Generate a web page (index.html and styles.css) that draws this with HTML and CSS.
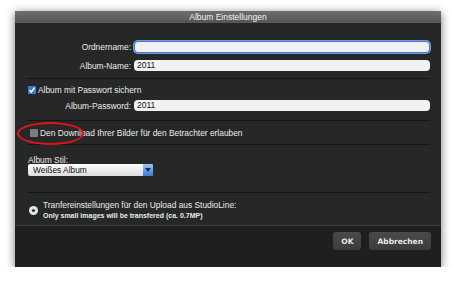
FILE: index.html
```html
<!DOCTYPE html>
<html lang="de">
<head>
  <meta charset="UTF-8">
  <title>Album Einstellungen</title>
  <link rel="stylesheet" href="styles.css">
</head>
<body>
  <div class="dialog">
    <div class="titlebar">Album Einstellungen</div>

    <!-- Name -->
    <div class="section sec-name">
      <div class="row">
        <label class="lbl">Ordnername:</label>
        <div class="input focus"></div>
      </div>
      <div class="row">
        <label class="lbl">Album-Name:</label>
        <div class="input">2011</div>
      </div>
    </div>

    <!-- Passwort -->
    <div class="section sec-pass">
      <div class="check-row">
        <span class="check on">
          <svg width="8" height="8" viewBox="0 0 8 8"><path d="M1.5 4.2 L3.3 6 L6.6 1.6" fill="none" stroke="#fff" stroke-width="1.5"/></svg>
        </span>
        Album mit Passwort sichern
      </div>
      <div class="row">
        <label class="lbl">Album-Password:</label>
        <div class="input">2011</div>
      </div>
    </div>

    <!-- Download -->
    <div class="section sec-dl">
      <div class="check-row">
        <span class="check"></span>
        Den Download Ihrer Bilder für den Betrachter erlauben
      </div>
      <span class="mark"></span>
    </div>

    <!-- Stil -->
    <div class="section sec-style">
      <div class="style-lbl">Album Stil:</div>
      <div class="select">
        <span class="sel-text">Weißes Album</span>
        <span class="sel-btn">
          <svg width="6" height="4" viewBox="0 0 6 4"><path d="M0 0 H6 L3 4 Z" fill="#1a2a55"/></svg>
        </span>
      </div>
    </div>

    <!-- Transfer -->
    <div class="section sec-transfer">
      <svg class="disc" width="9" height="9" viewBox="0 0 9 9"><circle cx="4.5" cy="4.5" r="4.5" fill="#e6e6e6"/><circle cx="4.5" cy="4.5" r="1.6" fill="#333"/></svg>
      <div class="transfer-text">
        <div class="t1">Tranfereinstellungen für den Upload aus StudioLine:</div>
        <div class="t2">Only small images will be transfered (ca. 0.7MP)</div>
      </div>
    </div>

    <div class="footer">
      <button class="btn">OK</button>
      <button class="btn">Abbrechen</button>
    </div>
  </div>
</body>
</html>
```

FILE: styles.css
```css
body {
  margin: 0;
  background: #fff;
  font-family: "Liberation Sans", Arial, sans-serif;
  font-size: 8.4px;
  color: #ececec;
}

/* dialog window */
.dialog {
  width: 426px;
  margin: 11px 0 0 15px;
  background: #262727;
  box-shadow: 0 2px 9px rgba(0,0,0,0.55);
  display: flex;
  flex-direction: column;
}

.titlebar {
  height: 12px;
  line-height: 12px;
  text-align: center;
  color: #f2f2f2;
  background: linear-gradient(#6e6e6e, #555);
  font-size: 8.5px;
}

/* sections with dark separators */
.section {
  margin: 0 11px 0 12px;
  border-bottom: 1px solid #151515;
  display: flex;
  flex-direction: column;
}

.row {
  display: flex;
  align-items: center;
}
.lbl {
  width: 104px;
  text-align: right;
  padding-right: 3px;
}
.input {
  flex: 1;
  height: 11px;
  line-height: 11px;
  background: #f1f1f1;
  border-radius: 4px;
  color: #111;
  padding-left: 3px;
  font-size: 8.5px;
}
.input.focus {
  height: 10px;
  border: 1px solid #4a78c4;
  box-shadow: 0 0 0 1px #6f9be0;
}

.sec-name {
  padding: 18px 0 7px;
  gap: 7px;
}

.sec-pass {
  padding: 6px 0 9px;
  gap: 5px;
}

.check-row {
  display: flex;
  align-items: center;
  height: 10px;
  gap: 2px;
}
.check {
  width: 8px;
  height: 8px;
  border-radius: 1px;
  background: #7b7b7b;
  display: flex;
  align-items: center;
  justify-content: center;
}
.check.on {
  background: #3d7bd6;
}
.sec-pass .check-row {
  margin-left: 1px;
}

.sec-dl {
  position: relative;
  padding: 7px 0 6px 3px;
}
/* red annotation ring */
.mark {
  position: absolute;
  left: -10px;
  top: 1px;
  width: 63px;
  height: 19px;
  border: 2px solid #e0141c;
  border-radius: 50%;
}

.sec-style {
  padding: 10px 0 16px 1px;
}
.style-lbl {
  height: 9px;
  line-height: 10px;
}
.select {
  width: 125px;
  height: 12px;
  display: flex;
  background: linear-gradient(#fdfdfd, #dcdcdc);
  border-radius: 2px;
  color: #111;
}
.sel-text {
  flex: 1;
  line-height: 12px;
  padding-left: 5px;
}
.sel-btn {
  width: 10px;
  display: flex;
  align-items: center;
  justify-content: center;
  background: linear-gradient(#9cc4f5, #3a7ad6);
  border-radius: 0 2px 2px 0;
}

.sec-transfer {
  flex-direction: row;
  align-items: center;
  gap: 5px;
  padding: 7px 0 4px 2px;
  border-bottom: none;
}
.transfer-text .t1 {
  line-height: 11px;
}
.transfer-text .t2 {
  font-size: 7px;
  font-weight: bold;
  line-height: 10px;
}

.footer {
  border-top: 1px solid #3a3a3a;
  background: #1e1f1f;
  height: 42px;
  display: flex;
  justify-content: flex-end;
  align-items: flex-start;
  gap: 8px;
  padding: 6px 10px 0 0;
  box-sizing: border-box;
}
.btn {
  height: 18px;
  padding: 0 8px;
  border: none;
  border-radius: 3px;
  background: linear-gradient(#4a4a4a, #3c3c3c);
  color: #e8e8e8;
  font-family: "DejaVu Sans", sans-serif;
  font-size: 7.5px;
  font-weight: bold;
}
.btn:first-child {
  width: 28px;
  padding: 0;
}
```
